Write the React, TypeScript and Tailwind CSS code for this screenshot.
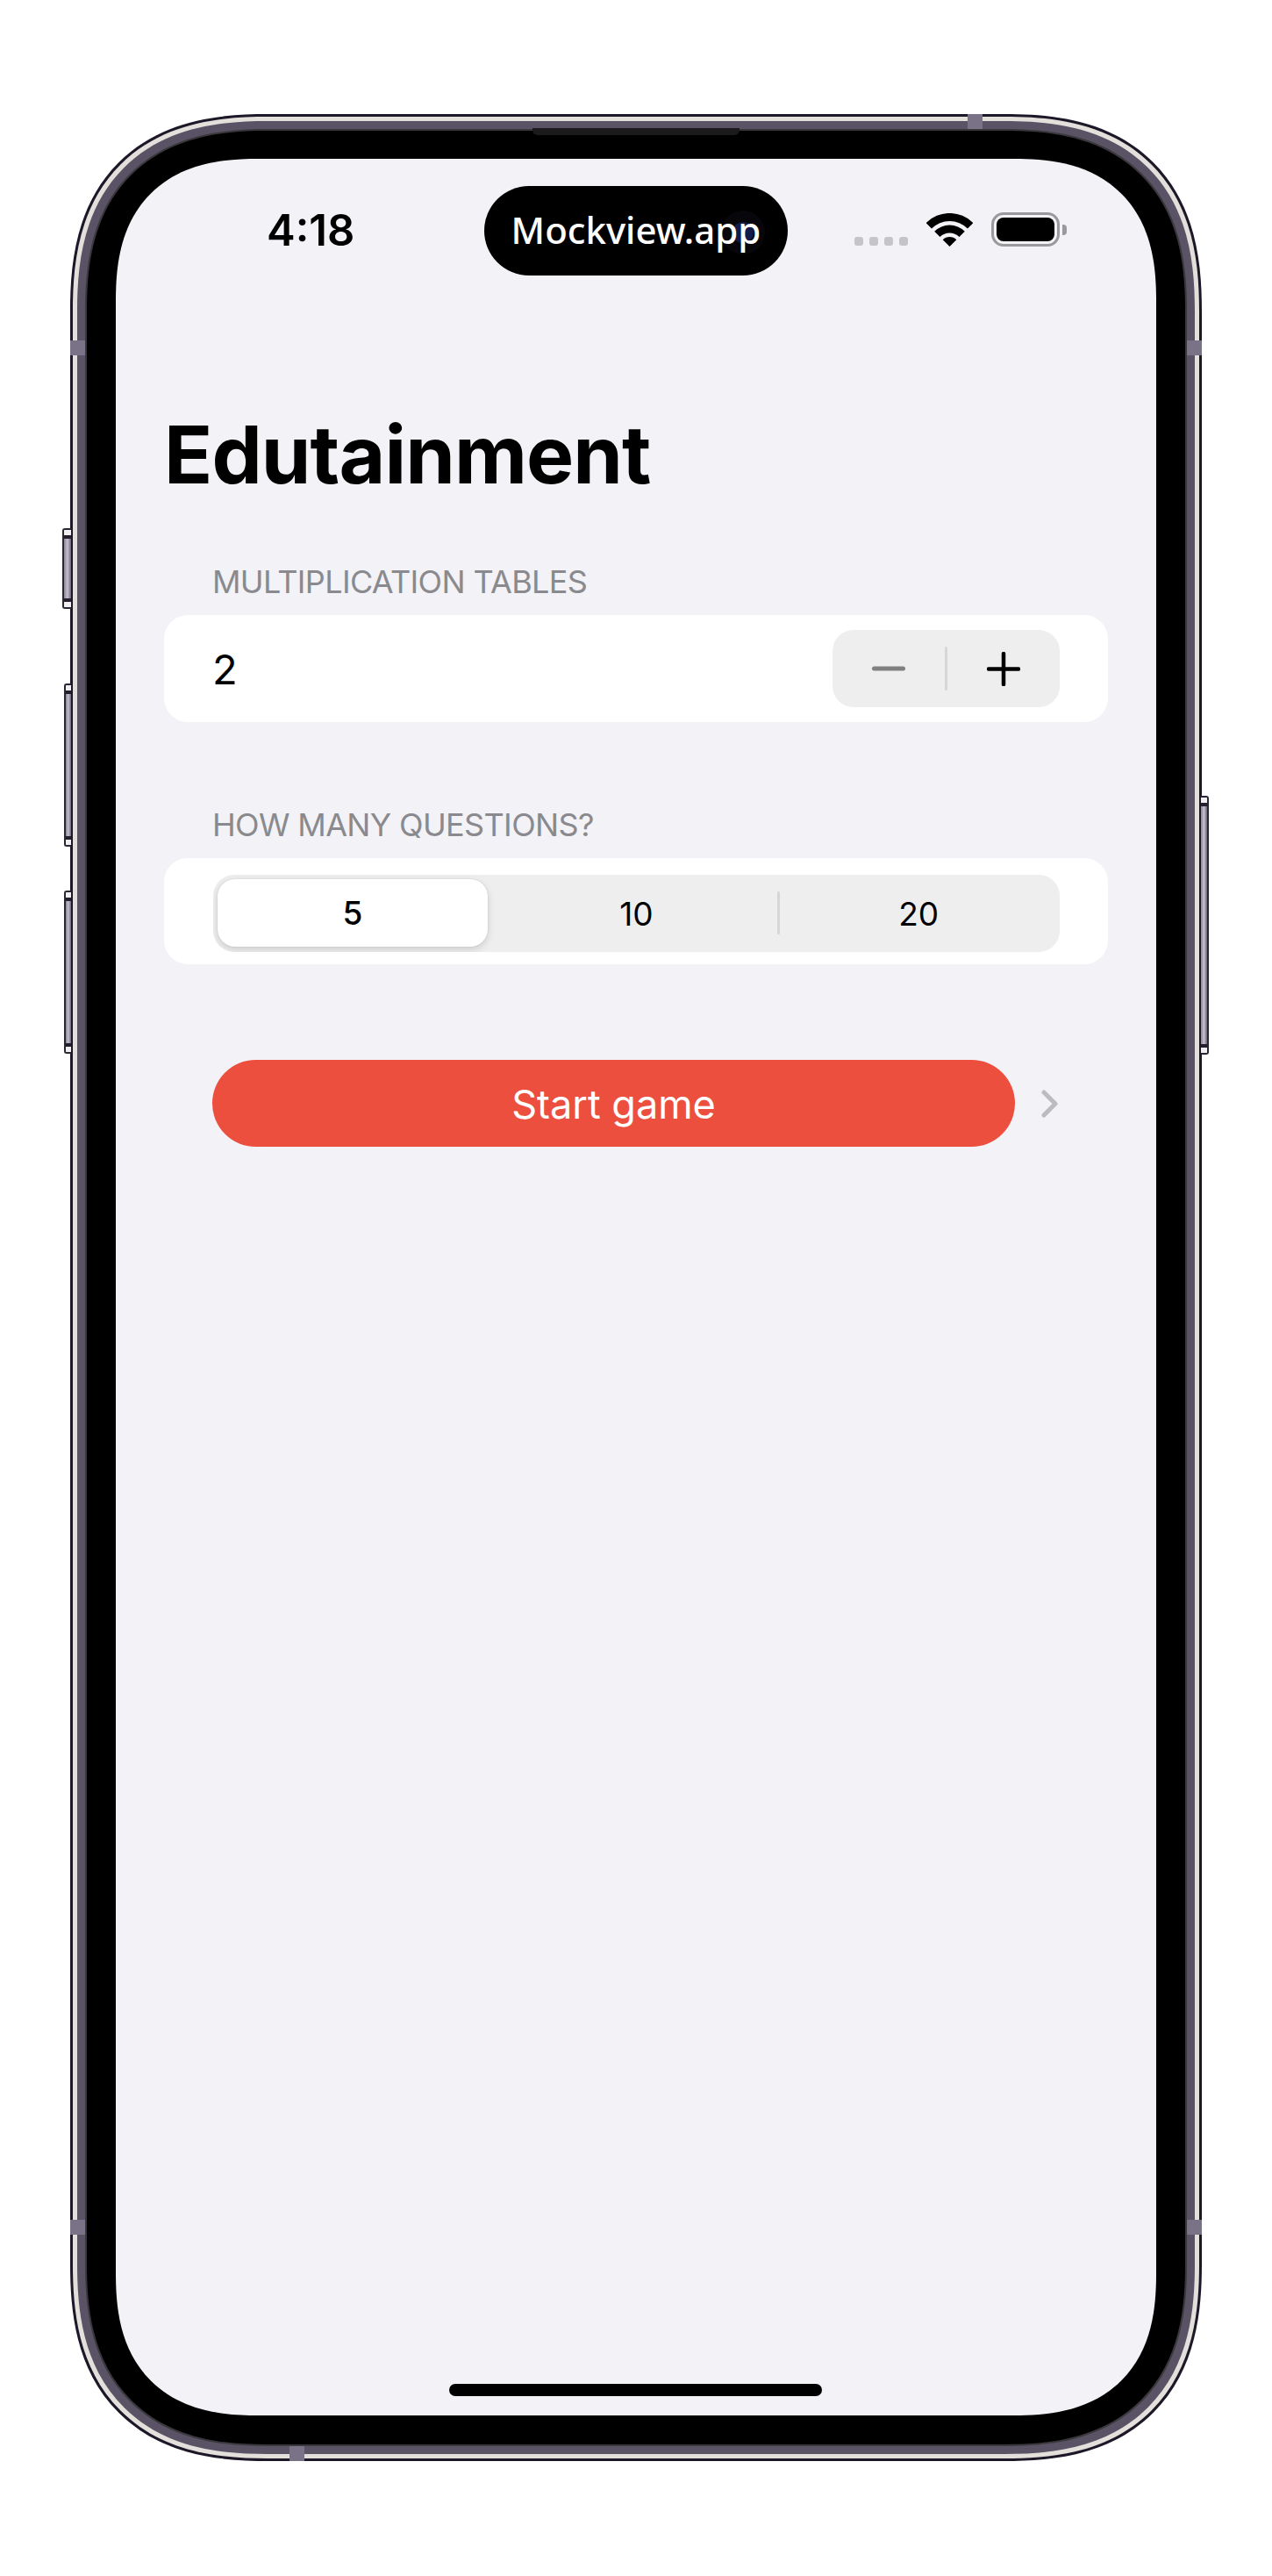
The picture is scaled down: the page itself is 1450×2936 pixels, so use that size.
function WifiIcon() {
  return (
    <svg width="53" height="38" viewBox="0 0 53 38" fill="#000">
      <path d="M-0.4 11.1A38 38 0 0 1 53.4 11.1L47 17.5A29 29 0 0 0 6 17.5Z" />
      <path d="M9.2 20.7A24.5 24.5 0 0 1 43.8 20.7L37.5 27A15.5 15.5 0 0 0 15.5 27Z" />
      <path d="M18.7 30.2A11 11 0 0 1 34.3 30.2L26.5 38Z" />
    </svg>
  );
}

function SideButton({ side, className }: { side: "left" | "right"; className: string }) {
  const shape =
    side === "left"
      ? "rounded-l-[3px] border-l-2 border-y-2"
      : "rounded-r-[3px] border-r-2 border-y-2";
  return (
    <div className={`absolute flex flex-col overflow-hidden border-[#2b2633] bg-[#d9d6e0] ${shape} ${className}`}>
      <div className="h-[6px] bg-[#f1eff2]" />
      <div className="h-[4px] bg-[#241f2c]" />
      <div className="flex-1 bg-gradient-to-r from-[#8d8799] via-[#c4c0ce] to-[#6b6477]" />
      <div className="h-[4px] bg-[#241f2c]" />
      <div className="h-[6px] bg-[#f1eff2]" />
    </div>
  );
}

function SectionLabel({ children }: { children: string }) {
  return (
    <div className="mb-[18px] h-[40px] pl-[55px] text-[36px] leading-[40px] tracking-[-0.65px] text-[#8a8a8e]">
      {children}
    </div>
  );
}

export default function App() {
  return (
    <div className="min-h-[2936px] bg-white pl-[80px] pt-[130px] font-[Inter,sans-serif]">
      <div className="relative h-[2675px] w-[1290px]">
        {/* side buttons */}
        <SideButton side="left" className="left-[-9px] top-[472px] h-[92px] w-[10px]" />
        <SideButton side="left" className="left-[-7px] top-[649px] h-[186px] w-[8px]" />
        <SideButton side="left" className="left-[-7px] top-[885px] h-[186px] w-[8px]" />
        <SideButton side="right" className="right-[-8px] top-[777px] h-[295px] w-[9px]" />

        {/* frame rings */}
        <div className="h-full rounded-[225px] bg-[#1d1828] p-[3px] [corner-shape:superellipse(1.3)]">
          <div className="h-full rounded-[222px] bg-[#e3e0dc] p-[5px] [corner-shape:superellipse(1.3)]">
            <div className="h-full rounded-[217px] bg-[#5a5366] p-[9px] [corner-shape:superellipse(1.3)]">
              <div className="h-full rounded-[208px] bg-[#3a383c] p-[2px] [corner-shape:superellipse(1.3)]">
                <div className="relative h-full rounded-[206px] bg-black pb-[33px] pl-[33px] pr-[33px] pt-[32px] [corner-shape:superellipse(1.3)]">
                  <div className="absolute left-[508px] top-[-3px] h-[8px] w-[236px] rounded-b-[6px] bg-[#1b1b1d]" />

                  {/* screen */}
                  <div className="relative h-full overflow-hidden rounded-[162px] bg-[#f2f2f7] [corner-shape:superellipse(1.3)]">
                    <div className="grid h-[133px] grid-cols-[1fr_346px_1fr] pt-[31px]">
                      <div className="flex items-center pb-[2px] pl-[172px] text-[49px] font-semibold leading-none text-black">
                        4:18
                      </div>
                      <div className="relative flex items-center justify-center rounded-full bg-black pb-[2px]">
                        <div className="absolute left-[270px] top-[28px] flex h-[50px] w-[50px] items-center justify-center rounded-full bg-[#06060b]">
                          <div className="h-[24px] w-[24px] rounded-full bg-[#121b4a]" />
                        </div>
                        <span className="relative font-['Noto_Sans',sans-serif] text-[42px] font-medium leading-none text-white">
                          Mockview.app
                        </span>
                      </div>
                      <div className="flex items-center pb-[3px] pl-[76px]">
                        <div className="flex items-end">
                          <div className="flex gap-[7px] pb-px">
                            <div className="h-[10px] w-[10px] rounded-[3px] bg-[#c5c5c9]" />
                            <div className="h-[10px] w-[10px] rounded-[3px] bg-[#c5c5c9]" />
                            <div className="h-[10px] w-[10px] rounded-[3px] bg-[#c5c5c9]" />
                            <div className="h-[10px] w-[10px] rounded-[3px] bg-[#c5c5c9]" />
                          </div>
                          <div className="ml-[21px] flex">
                            <WifiIcon />
                          </div>
                          <div className="ml-[21px] flex items-center">
                            <div className="h-[39px] w-[78px] rounded-[14px] border-[3px] border-[#9a9a9c] p-[3px]">
                              <div className="h-full rounded-[8px] bg-black" />
                            </div>
                            <div className="ml-[3px] h-[12px] w-[5px] rounded-r-[4px] bg-[#9a9a9c]" />
                          </div>
                        </div>
                      </div>
                    </div>

                    <div className="px-[55px]">
                      <h1 className="mt-[159px] h-[90px] text-[91px] font-bold leading-[90px] tracking-[-0.9px] text-black">
                        Edutainment
                      </h1>

                      <div className="mt-[80px]">
                        <SectionLabel>MULTIPLICATION TABLES</SectionLabel>
                        <div className="flex h-[122px] items-center justify-between rounded-[27px] bg-white pl-[55px] pr-[55px]">
                          <span className="text-[47px] leading-none text-black">2</span>
                          <div className="flex h-[88px] w-[259px] items-center rounded-[24px] bg-[#eeeeef]">
                            <div className="flex flex-1 justify-center">
                              <svg width="38" height="6" viewBox="0 0 38 6">
                                <path d="M2.5 3H35.5" stroke="#808080" strokeWidth="5" strokeLinecap="round" />
                              </svg>
                            </div>
                            <div className="h-[50px] w-[3px] rounded-full bg-[#d6d6d8]" />
                            <div className="flex flex-1 justify-center">
                              <svg width="38" height="39" viewBox="0 0 38 39">
                                <path d="M2 19.5H36M19 2V37" stroke="#000" strokeWidth="4.5" strokeLinecap="round" />
                              </svg>
                            </div>
                          </div>
                        </div>
                      </div>

                      <div className="mt-[97px]">
                        <SectionLabel>HOW MANY QUESTIONS?</SectionLabel>
                        <div className="h-[121px] rounded-[27px] bg-white pl-[56px] pr-[55px] pt-[19px]">
                          <div className="grid h-[88px] grid-cols-3 overflow-hidden rounded-[24px] bg-[#eeeeef] text-[37px] leading-none text-black">
                            <div className="pb-[6px] pl-[5px] pr-[9px] pt-[5px]">
                              <div className="flex h-full items-center justify-center rounded-[20px] bg-white font-medium shadow-[0_3px_8px_rgba(0,0,0,0.14),0_0_2px_rgba(0,0,0,0.12)]">
                                5
                              </div>
                            </div>
                            <div className="flex items-center justify-center">10</div>
                            <div className="relative flex items-center justify-center">
                              <div className="absolute left-0 top-[19px] h-[49px] w-[3px] rounded-full bg-[#d6d6d8]" />
                              20
                            </div>
                          </div>
                        </div>
                      </div>

                      <div className="mt-[109px] flex items-center pl-[55px] pr-[2px]">
                        <div className="flex h-[99px] w-[915px] items-center justify-center rounded-full bg-[#ed4f3e] pt-[2px] text-[45px] leading-none text-white">
                          Start game
                        </div>
                        <svg className="ml-[30px]" width="19" height="32" viewBox="0 0 19 32">
                          <path d="M3 3L16 16L3 29" fill="none" stroke="#bcbcc0" strokeWidth="5" strokeLinecap="round" strokeLinejoin="round" />
                        </svg>
                      </div>
                    </div>

                    <div className="absolute bottom-[22px] left-[380px] h-[14px] w-[425px] rounded-full bg-black" />
                  </div>
                </div>
              </div>
            </div>
          </div>
        </div>

        {/* antenna bands */}
        <div className="absolute left-[1023px] top-0 h-[17px] w-[17px] bg-[#7a7286]" />
        <div className="absolute bottom-0 left-[250px] h-[17px] w-[17px] bg-[#7a7286]" />
        <div className="absolute left-0 top-[258px] h-[17px] w-[17px] bg-[#7a7286]" />
        <div className="absolute right-0 top-[258px] h-[17px] w-[17px] bg-[#7a7286]" />
        <div className="absolute bottom-[258px] left-0 h-[17px] w-[17px] bg-[#7a7286]" />
        <div className="absolute bottom-[258px] right-0 h-[17px] w-[17px] bg-[#7a7286]" />
      </div>
    </div>
  );
}
